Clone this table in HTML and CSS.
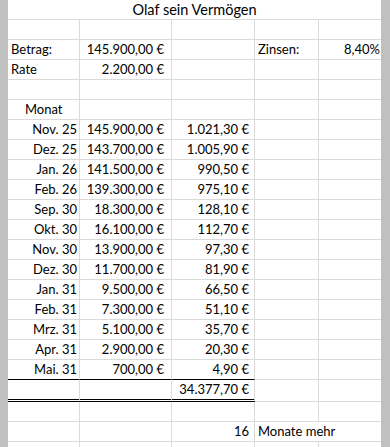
FILE: index.html
```html
<!DOCTYPE html>
<html lang="de">
<head>
<meta charset="utf-8">
<title>Olaf sein Vermögen</title>
<link rel="stylesheet" href="styles.css">
</head>
<body>
<div class="sheet">
  <div class="c title">Olaf sein Vermögen</div>

  <div class="c"></div><div class="c"></div><div class="c"></div><div class="c"></div><div class="c e"></div>

  <div class="c">Betrag:</div><div class="c r eur">145.900,00 €</div><div class="c"></div><div class="c">Zinsen:</div><div class="c e r pct">8,40%</div>
  <div class="c">Rate</div><div class="c r eur">2.200,00 €</div><div class="c"></div><div class="c"></div><div class="c e"></div>
  <div class="c"></div><div class="c"></div><div class="c"></div><div class="c"></div><div class="c e"></div>
  <div class="c indent">Monat</div><div class="c"></div><div class="c"></div><div class="c"></div><div class="c e"></div>

  <div class="c r date">Nov. 25</div><div class="c r eur">145.900,00 €</div><div class="c r zins">1.021,30 €</div><div class="c"></div><div class="c e"></div>
  <div class="c r date">Dez. 25</div><div class="c r eur">143.700,00 €</div><div class="c r zins">1.005,90 €</div><div class="c"></div><div class="c e"></div>
  <div class="c r date">Jan. 26</div><div class="c r eur">141.500,00 €</div><div class="c r zins">990,50 €</div><div class="c"></div><div class="c e"></div>
  <div class="c r date">Feb. 26</div><div class="c r eur">139.300,00 €</div><div class="c r zins">975,10 €</div><div class="c"></div><div class="c e"></div>
  <div class="c r date">Sep. 30</div><div class="c r eur">18.300,00 €</div><div class="c r zins">128,10 €</div><div class="c"></div><div class="c e"></div>
  <div class="c r date">Okt. 30</div><div class="c r eur">16.100,00 €</div><div class="c r zins">112,70 €</div><div class="c"></div><div class="c e"></div>
  <div class="c r date">Nov. 30</div><div class="c r eur">13.900,00 €</div><div class="c r zins">97,30 €</div><div class="c"></div><div class="c e"></div>
  <div class="c r date">Dez. 30</div><div class="c r eur">11.700,00 €</div><div class="c r zins">81,90 €</div><div class="c"></div><div class="c e"></div>
  <div class="c r date">Jan. 31</div><div class="c r eur">9.500,00 €</div><div class="c r zins">66,50 €</div><div class="c"></div><div class="c e"></div>
  <div class="c r date">Feb. 31</div><div class="c r eur">7.300,00 €</div><div class="c r zins">51,10 €</div><div class="c"></div><div class="c e"></div>
  <div class="c r date">Mrz. 31</div><div class="c r eur">5.100,00 €</div><div class="c r zins">35,70 €</div><div class="c"></div><div class="c e"></div>
  <div class="c r date">Apr. 31</div><div class="c r eur">2.900,00 €</div><div class="c r zins">20,30 €</div><div class="c"></div><div class="c e"></div>
  <div class="c r date last">Mai. 31</div><div class="c r eur last">700,00 €</div><div class="c r zins last">4,90 €</div><div class="c"></div><div class="c e"></div>

  <div class="c sum"></div><div class="c sum"></div><div class="c r zins sum">34.377,70 €</div><div class="c sumrest"></div><div class="c e sumrest"></div>

  <div class="c"></div><div class="c"></div><div class="c"></div><div class="c"></div><div class="c e"></div>
  <div class="c"></div><div class="c"></div><div class="c r zins">16</div><div class="c e span2">Monate mehr</div>
  <div class="c"></div><div class="c"></div><div class="c"></div><div class="c"></div><div class="c e"></div>
</div>
</body>
</html>
```
FILE: styles.css
```css
html, body {
  margin: 0;
  padding: 0;
  background: #c0c0c0;
  height: 447px;
  overflow: hidden;
}

.sheet {
  margin-left: 8px;
  width: 373px;
  height: 447px;
  overflow: hidden;
  background: #ffffff;
  display: grid;
  grid-template-columns: 72px 92px 83px 64px 62px;
  grid-auto-rows: min-content;
  font-family: Lato, "Liberation Sans", sans-serif;
  font-size: 13px;
  color: #000;
}

.c {
  height: 20px;
  box-sizing: border-box;
  border-right: 1px solid #dadada;
  border-bottom: 1px solid #dadada;
  line-height: 19px;
  padding: 0 2px 0 3px;
  white-space: nowrap;
  overflow: hidden;
}

.c.e {
  border-right: none;
}

.title {
  grid-column: 1 / -1;
  border-right: none;
  text-align: center;
  padding: 0;
  font-size: 14.5px;
}

.span2 {
  grid-column: span 2;
}

.r {
  text-align: right;
}

.indent {
  padding-left: 17px;
}

.date {
  padding-right: 2px;
}

.eur {
  padding-right: 7px;
}

.zins {
  padding-right: 5px;
}

.pct {
  padding-right: 1px;
}

.last {
  border-bottom: 1px solid #000;
}

.sum {
  height: 22px;
  border-bottom: 3px double #000;
}

.sumrest {
  height: 22px;
}
```
